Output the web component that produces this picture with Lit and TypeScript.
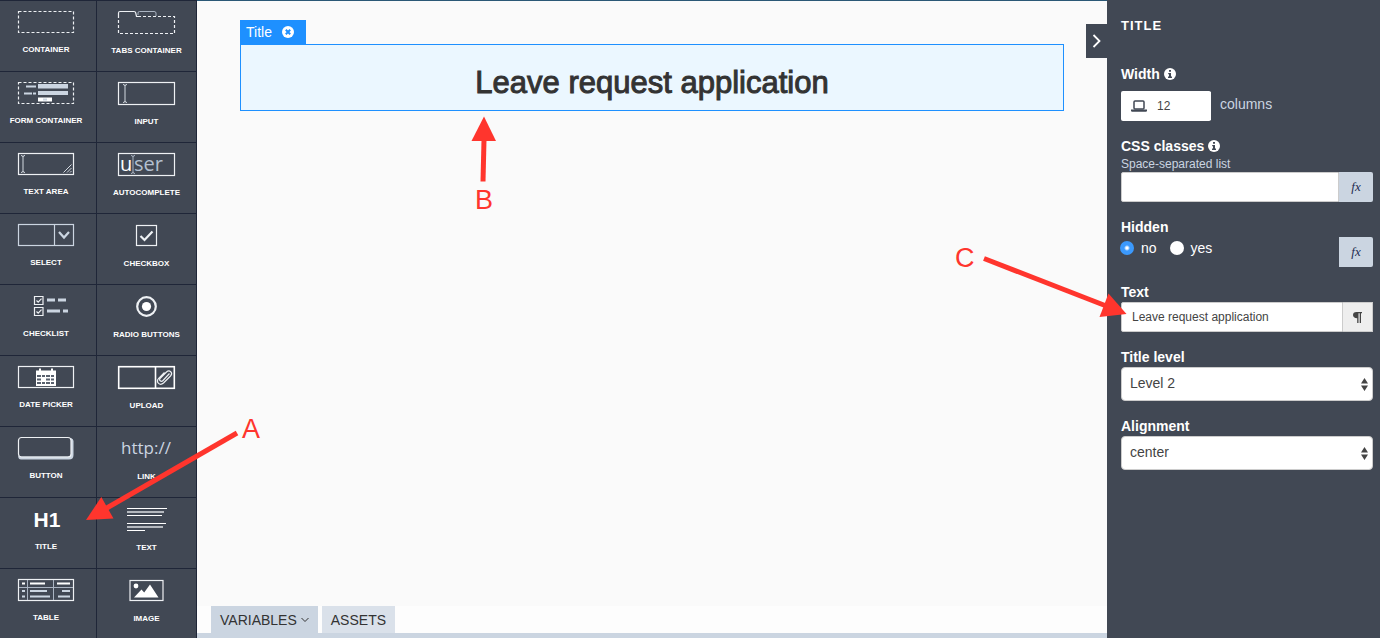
import { LitElement, html, css, svg, TemplateResult } from "lit";
import { customElement, property, state } from "lit/decorators.js";

type Glyph = TemplateResult;

interface PaletteEntry {
  label: string;
  glyph: Glyph;
}

const glyphs: Record<string, Glyph> = {
  container: svg`<rect class="dash" x="0.5" y="0.5" width="55" height="21" />`,
  tabs: svg`
    <path class="line" d="M0.5 5V2q0-1.5 1.500-1.500H16q1.500 0 1.700 1.500L18.500 5.500H20" />
    <path class="soft" d="M20 4V2q0-1.500 1.500-1.500H36q2 0 2 1.500V5" />
    <path class="dash" d="M20 5.500H56.500V22.500H0.500V5" />`,
  form: svg`
    <rect class="dash" x="0.5" y="0.5" width="55" height="21" />
    <path class="tint" d="M8 3.500h10v2H8zM6 10.500h8v2H6zM15 10.500h3v2h-3zM20 2h30v4.500H20zM20 9h30v4H20z" />
    <path class="fill" d="M20 15.500h14v4H20z" />
    <path class="tint" d="M25 16.500h4v2h-4z" />`,
  input: svg`
    <rect class="line" x="0.5" y="0.5" width="56" height="22" />
    <path class="line thin" d="M5 2.500q2 0 2 1.500q0-1.500 2-1.500M7 4v15M5 20.500q2 0 2-1.500q0 1.500 2 1.500" />`,
  textarea: svg`
    <rect class="line" x="0.5" y="0.5" width="55" height="21" />
    <path class="line thin" d="M3 2.500q2 0 2 1.500q0-1.500 2-1.500M5 4v14M3 19.500q2 0 2-1.500q0 1.500 2 1.500M45.500 19.500l8-8M49 19.500l4.500-4.500M52 19.500l1.500-1.500" />`,
  autocomplete: svg`
    <rect class="line" x="0.5" y="0.5" width="56" height="22" />
    <text class="word bright" x="2" y="18">u</text>
    <text class="word" x="16" y="18">ser</text>
    <path class="soft" d="M13 2.500q2 0 2 1.500q0-1.500 2-1.500M15 4v15M13 20.500q2 0 2-1.500q0 1.500 2 1.500" />`,
  select: svg`
    <rect class="cool" x="0.5" y="0.5" width="55" height="21" />
    <path class="cool" d="M36.500 0v22" />
    <path class="cool bold" d="M41 8l5 5.500 5-5.500" />`,
  checkbox: svg`
    <rect class="line" x="18.500" y="1.500" width="20" height="20" />
    <path class="line bold" d="M22.500 12l4 4 8-8.500" />`,
  checklist: svg`
    <path class="line" d="M16.500 1.500h8.500v8h-8.500zM16.500 12.500h8.500v8h-8.500z" />
    <path class="line" d="M18.500 5.500l1.700 1.700 3.300-3.500M18.500 16.500l1.700 1.700 3.300-3.500" />
    <path class="tint" d="M29 3.500h8v3h-8zM40 3.500h8v3h-8zM29 14.500h13v3H29zM45 14.500h5v3h-5z" />`,
  radio: svg`
    <circle class="line bold" cx="28.500" cy="11.500" r="9.300" />
    <circle class="fill" cx="28.500" cy="11.500" r="4.600" />`,
  date: svg`
    <rect class="line" x="0.5" y="0.5" width="55" height="21" />
    <path class="fill" d="M18 4.500h3V2.500h2v2h10v-2h2v2h3V20H18z" />
    <path class="gap" d="M19 9h4v2h-4zM24 9h3v2h-3zM28 9h4v2h-4zM33 9h3v2h-3zM19 12.500h4v2h-4zM28 12.500h4v2h-4zM33 12.500h3v2h-3zM19 16h4v2h-4zM24 16h3v2h-3zM28 16h4v2h-4zM33 16h3v2h-3z" />`,
  upload: svg`
    <rect class="line wide" x="0.7" y="0.7" width="55.600" height="21.600" />
    <path class="line wide" d="M37.500 1v21" />
    <path class="line" d="M51.500 7.500L45 14.500q-1.500 1.500-2.800.300t.300-2.800L48.500 6q2.200-2 4.200-.300 2 2-.200 4.300L45.500 17q-2.700 2.400-5 .400-2.200-2.400.200-5L46.500 6.500" />`,
  button: svg`
    <path class="tint" d="M3 22.500q-2.500 0-3-3.500l2 .500h48q3 0 3-3V1q2.500.800 2.500 3v14q0 4.500-4.500 4.500z" />
    <rect class="line" x="0.5" y="0.5" width="52.500" height="19.500" rx="3" />`,
  link: svg`<text class="url" x="28" y="17">http://</text>`,
  title: svg`<text class="h1" x="29" y="19">H1</text>`,
  text: svg`
    <path class="fill" d="M9 0h40v1H9zM9 7h35v1H9zM9 15h39v1H9zM9 22h18v1H9z" />
    <path class="dim" d="M9 3h37v2H9zM9 18h36v2H9z" />`,
  table: svg`
    <rect class="line" x="0.5" y="0.5" width="55" height="21" />
    <path class="soft" d="M9.500 1v20M35.500 1v20M1 8.500h54" />
    <path class="fill" d="M4 3.500h3v2H4zM12 3.500h15v2H12zM39 3.500h13v2H39z" />
    <path class="tint" d="M4 11h3v2H4zM12 11h17v2H12zM44 11h8v2h-8zM4 16.500h3v2H4zM12 16.500h20v2H12zM40 16.500h12v2H40z" />`,
  image: svg`
    <rect class="line" x="12" y="1.500" width="33" height="20" />
    <circle class="fill" cx="18" cy="7" r="2.400" />
    <path class="fill" d="M16 18.500l7.500-8 2.700 3L32 5.500l8.500 13z" />`,
};

const entries: PaletteEntry[] = [
  { label: "CONTAINER", glyph: glyphs.container },
  { label: "TABS CONTAINER", glyph: glyphs.tabs },
  { label: "FORM CONTAINER", glyph: glyphs.form },
  { label: "INPUT", glyph: glyphs.input },
  { label: "TEXT AREA", glyph: glyphs.textarea },
  { label: "AUTOCOMPLETE", glyph: glyphs.autocomplete },
  { label: "SELECT", glyph: glyphs.select },
  { label: "CHECKBOX", glyph: glyphs.checkbox },
  { label: "CHECKLIST", glyph: glyphs.checklist },
  { label: "RADIO BUTTONS", glyph: glyphs.radio },
  { label: "DATE PICKER", glyph: glyphs.date },
  { label: "UPLOAD", glyph: glyphs.upload },
  { label: "BUTTON", glyph: glyphs.button },
  { label: "LINK", glyph: glyphs.link },
  { label: "TITLE", glyph: glyphs.title },
  { label: "TEXT", glyph: glyphs.text },
  { label: "TABLE", glyph: glyphs.table },
  { label: "IMAGE", glyph: glyphs.image },
];

@customElement("widget-palette")
export class WidgetPalette extends LitElement {
  static styles = css`
    :host {
      display: block;
      overflow: hidden;
      background: #414854;
      border-right: 1px solid #1f2638;
      font-family: "Liberation Sans", Arial, sans-serif;
    }
    .grid {
      display: grid;
      grid-template-columns: 97px 99px;
    }
    .item {
      box-sizing: border-box;
      height: 71px;
      margin: 0;
      padding: 10px 0 0;
      border: 0;
      border-top: 1px solid #1f2638;
      background: none;
      color: #fff;
      display: flex;
      flex-direction: column;
      align-items: center;
      gap: 12px;
      font: bold 8px/10px "Liberation Sans", Arial, sans-serif;
      white-space: nowrap;
    }
    .item:nth-child(odd) {
      border-right: 1px solid #1f2638;
      padding-right: 4px;
    }
    svg { display: block; overflow: visible; }
    .line, .soft, .cool, .dash { fill: none; stroke: #eef1f4; stroke-width: 1.2; }
    .thin { stroke-width: 1; stroke: #d3d9e0; }
    .soft { stroke: #aab4c2; stroke-width: 1; }
    .cool { stroke: #cbd5e1; }
    .wide { stroke-width: 1.6; stroke: #fff; }
    .bold { stroke-width: 2.2; }
    .dash { stroke-dasharray: 3 2; }
    .fill { fill: #fff; }
    .tint { fill: #cbd5e1; }
    .dim { fill: #b4b8be; }
    .gap { fill: #59616e; }
    .word { font: 20px "Open Sans", sans-serif; fill: #b4c0d0; }
    .bright { fill: #fff; }
    .url { font: 17px "Open Sans", sans-serif; fill: #cbd5e1; text-anchor: middle; }
    .h1 { font: bold 21px "Liberation Sans", Arial, sans-serif; fill: #fff; text-anchor: middle; }
  `;

  render() {
    return html`<div class="grid">
      ${entries.map((entry, i) => {
        const w = i % 2 ? 57 : 56;
        const h = i % 2 ? 23 : 22;
        return html`<button class="item" type="button">
          <svg width=${w} height=${h} viewBox="0 0 ${w} ${h}" aria-hidden="true">${entry.glyph}</svg>
          <span>${entry.label}</span>
        </button>`;
      })}
    </div>`;
  }
}

@customElement("page-canvas")
export class PageCanvas extends LitElement {
  @property() text = "";
  @property() align = "center";

  static styles = css`
    :host {
      position: relative;
      display: flex;
      flex-direction: column;
      min-width: 0;
      background: #fafafa;
      border-top: 1px solid #2b5876;
      font-family: "Liberation Sans", Arial, sans-serif;
    }
    .stage { flex: 1; min-height: 0; padding: 19px 43px 0; }
    .tag {
      display: inline-flex;
      align-items: center;
      gap: 10px;
      height: 24px;
      padding: 0 12px 0 6px;
      background: #1e90ff;
      color: #fff;
      font-size: 14px;
      vertical-align: top;
    }
    .remove { display: flex; margin: 0; padding: 0; border: 0; background: none; }
    .selected {
      padding: 21px 10px 10px;
      border: 1px solid #1e90ff;
      background: #ebf7ff;
    }
    .heading {
      margin: 0;
      color: #333;
      font-size: 31px;
      line-height: 34px;
      font-weight: 400;
      -webkit-text-stroke: 1px #333;
    }
    .center { text-align: center; }
    .left { text-align: left; }
    .right { text-align: right; }
    .collapse {
      position: absolute;
      top: 23px;
      right: 0;
      width: 21px;
      height: 34px;
      padding: 0;
      border: 0;
      background: #414854;
      display: flex;
      align-items: center;
      justify-content: center;
    }
    .tabs {
      display: flex;
      gap: 4px;
      padding-left: 14px;
      background: #fdfdfd;
      border-bottom: 5px solid #cbd5e1;
    }
    .tab {
      display: flex;
      align-items: center;
      gap: 4px;
      height: 27px;
      margin: 0;
      padding: 0 9px;
      border: 0;
      background: #dae1ea;
      color: #333;
      font: 14px "Liberation Sans", Arial, sans-serif;
    }
    .open { background: #cbd5e1; }
  `;

  render() {
    return html`
      <main class="stage">
        <div class="tag">
          Title
          <button class="remove" type="button" aria-label="Remove">
            <svg width="12" height="12" viewBox="0 0 12 12">
              <circle cx="6" cy="6" r="6" fill="#fff" />
              <path d="M3.800 3.800l4.400 4.400M8.200 3.800L3.800 8.200" stroke="#1e90ff" stroke-width="2" />
            </svg>
          </button>
        </div>
        <div class="selected">
          <h2 class="heading ${this.align}">${this.text}</h2>
        </div>
      </main>
      <button class="collapse" type="button" aria-label="Collapse panel">
        <svg width="9" height="14" viewBox="0 0 9 14">
          <path d="M1.500 1l6 6-6 6" fill="none" stroke="#fff" stroke-width="1.800" />
        </svg>
      </button>
      <nav class="tabs">
        <button class="tab open" type="button">
          VARIABLES
          <svg width="8" height="6" viewBox="0 0 8 6">
            <path d="M0.500 1l3.500 3.500 3.500-3.500" fill="none" stroke="#333" />
          </svg>
        </button>
        <button class="tab" type="button">ASSETS</button>
      </nav>
    `;
  }
}

@customElement("property-panel")
export class PropertyPanel extends LitElement {
  @property() text = "";

  static styles = css`
    :host {
      display: block;
      overflow: hidden;
      background: #414854;
      color: #fff;
      padding: 16px 7px 0 14px;
      font: 14px/20px "Liberation Sans", Arial, sans-serif;
    }
    .name {
      margin: 0 0 28px;
      font-size: 13px;
      line-height: 20px;
      letter-spacing: 1px;
    }
    .field { margin-bottom: 15px; }
    .label { display: flex; align-items: center; gap: 4px; font-weight: bold; }
    .row { display: flex; }
    .help { color: #cbd5e1; font-size: 12px; line-height: 16px; }
    input, select, .action, .pilcrow {
      box-sizing: border-box;
      margin: 0;
      border: 0;
      border-radius: 0;
      outline: 0;
    }
    .box {
      flex: 1;
      min-width: 0;
      height: 30px;
      padding: 0 10px;
      border: 1px solid #ccc;
      background: #fff;
      color: #444;
      font: 12px "Liberation Sans", Arial, sans-serif;
      border-radius: 2px 0 0 2px;
    }
    .action {
      width: 34px;
      height: 30px;
      padding: 0;
      background: #cbd5e1;
      color: #1f2d50;
      font: italic 13px "Liberation Serif", serif;
      border-radius: 0 2px 2px 0;
    }
    .pilcrow {
      width: 30px;
      height: 30px;
      padding: 0;
      border: 1px solid #ccc;
      border-left: 0;
      background: #eee;
      display: flex;
      align-items: center;
      justify-content: center;
    }
    .size { align-items: center; gap: 9px; margin-top: 7px; color: #cbd5e1; }
    .device {
      display: flex;
      align-items: center;
      box-sizing: border-box;
      width: 90px;
      height: 30px;
      padding-left: 10px;
      background: #fff;
      border-radius: 2px;
    }
    .device .box { border: 0; height: 28px; }
    .columns { padding-bottom: 4px; }
    .choices { justify-content: space-between; }
    .choice { display: flex; align-items: center; gap: 7px; height: 22px; }
    .options { display: flex; gap: 13px; margin-left: -1px; }
    .radio {
      appearance: none;
      width: 14px;
      height: 14px;
      border-radius: 50%;
      background: #fff;
    }
    .radio:checked {
      background: radial-gradient(circle, #fff 1px, #3b99fc 3px);
    }
    .drop { display: grid; align-items: center; }
    .drop > * { grid-area: 1 / 1; }
    .drop svg { justify-self: end; margin-right: 5px; pointer-events: none; }
    .select {
      appearance: none;
      width: 100%;
      height: 34px;
      padding: 0 8px 2px;
      border: 1px solid #ccc;
      border-radius: 4px;
      background: #fff;
      color: #444;
      font: 14px "Liberation Sans", Arial, sans-serif;
    }
  `;

  private info() {
    return html`<svg width="12" height="12" viewBox="0 0 12 12" aria-hidden="true">
      <circle cx="6" cy="6" r="6" fill="#fff" />
      <path d="M5 2h2v1.700H5zM4.200 5H7v3.500h1V10H4V8.500h1V6.300h-.8z" fill="#414854" />
    </svg>`;
  }

  private notify(key: string, value: string) {
    this.dispatchEvent(new CustomEvent("edit", { detail: { key, value } }));
  }

  private drop(id: string, options: string[], selected: string) {
    return html`<div class="drop">
      <select class="select" id=${id}
        @change=${(e: Event) => this.notify(id, (e.target as HTMLSelectElement).value)}>
        ${options.map((o) => html`<option value=${o} ?selected=${o === selected}>${o}</option>`)}
      </select>
      <svg width="7" height="13" viewBox="0 0 7 13" aria-hidden="true">
        <path d="M0 5.500L3.500 0 7 5.500zM0 7.500L3.500 13 7 7.500z" fill="#444" />
      </svg>
    </div>`;
  }

  render() {
    return html`
      <h1 class="name">TITLE</h1>
      <div class="field">
        <label class="label" for="width">Width ${this.info()}</label>
        <div class="row size">
          <div class="device">
            <svg width="16" height="12" viewBox="0 0 16 12" aria-hidden="true">
              <path d="M3 8V2q0-1 1-1h8q1 0 1 1v6q0 1-1 1H4q-1 0-1-1z" fill="none" stroke="#414854" stroke-width="1.500" />
              <path d="M0 9.500h16v1q0 1.200-1.200 1.200H1.200Q0 11.700 0 10.500z" fill="#414854" />
            </svg>
            <input class="box" id="width" type="text" value="12" />
          </div>
          <span class="columns">columns</span>
        </div>
      </div>
      <div class="field">
        <label class="label" for="classes">CSS classes ${this.info()}</label>
        <div class="help">Space-separated list</div>
        <div class="row">
          <input class="box" id="classes" type="text" />
          <button class="action" type="button">fx</button>
        </div>
      </div>
      <div class="field" role="radiogroup" aria-labelledby="hidden-label">
        <div class="label" id="hidden-label">Hidden</div>
        <div class="row choices">
          <div class="options">
            <label class="choice"><input class="radio" type="radio" name="hidden" checked />no</label>
            <label class="choice"><input class="radio" type="radio" name="hidden" />yes</label>
          </div>
          <button class="action" type="button">fx</button>
        </div>
      </div>
      <div class="field">
        <label class="label" for="text">Text</label>
        <div class="row">
          <input class="box" id="text" type="text" .value=${this.text}
            @input=${(e: Event) => this.notify("text", (e.target as HTMLInputElement).value)} />
          <button class="pilcrow" type="button" aria-label="Rich text">
            <svg width="9" height="11" viewBox="0 0 9 11">
              <path d="M3.500 0H9v1.300H8V11H6.700V1.300H5.500V11H4.200V6.200Q0 6.200 0 3.100 0 0 3.500 0z" fill="#444" />
            </svg>
          </button>
        </div>
      </div>
      <div class="field">
        <label class="label" for="level">Title level</label>
        ${this.drop("level", ["Level 1", "Level 2", "Level 3", "Level 4"], "Level 2")}
      </div>
      <div class="field">
        <label class="label" for="align">Alignment</label>
        ${this.drop("align", ["left", "center", "right"], "center")}
      </div>
    `;
  }
}

@customElement("app-root")
export class AppRoot extends LitElement {
  @state() private text = "Leave request application";
  @state() private align = "center";

  static styles = css`
    :host {
      position: relative;
      display: grid;
      grid-template-columns: auto minmax(0, 1fr) 273px;
      grid-template-rows: minmax(0, 1fr);
      height: 100vh;
      overflow: hidden;
    }
    .marks {
      position: absolute;
      top: 0;
      overflow: visible;
      pointer-events: none;
      fill: #ff352d;
      font: 27px "Liberation Sans", Arial, sans-serif;
    }
    .from-left { left: 0; }
    .from-right { right: 0; }
    .shaft { stroke: #ff352d; stroke-width: 5; }
  `;

  private onEdit(e: CustomEvent<{ key: string; value: string }>) {
    if (e.detail.key === "text") this.text = e.detail.value;
    if (e.detail.key === "align") this.align = e.detail.value;
  }

  render() {
    return html`
      <widget-palette></widget-palette>
      <page-canvas .text=${this.text} .align=${this.align}></page-canvas>
      <property-panel .text=${this.text} @edit=${this.onEdit}></property-panel>
      <svg class="marks from-left" width="500" height="530" viewBox="0 0 500 530">
        <path class="shaft" d="M237 433L106 508.500" />
        <path d="M86 520L101.300 497 113.500 518.500z" />
        <text x="242" y="438">A</text>
        <path class="shaft" d="M483 181.500L484 140" />
        <path d="M484 116.500L471.500 141H496z" />
        <text x="475" y="209">B</text>
      </svg>
      <svg class="marks from-right" width="430" height="330" viewBox="0 0 430 330">
        <path class="shaft" d="M34 258.500L155 305.500" />
        <path d="M176.500 314L158.500 293.500 149.500 317z" />
        <text x="5" y="267">C</text>
      </svg>
    `;
  }
}
